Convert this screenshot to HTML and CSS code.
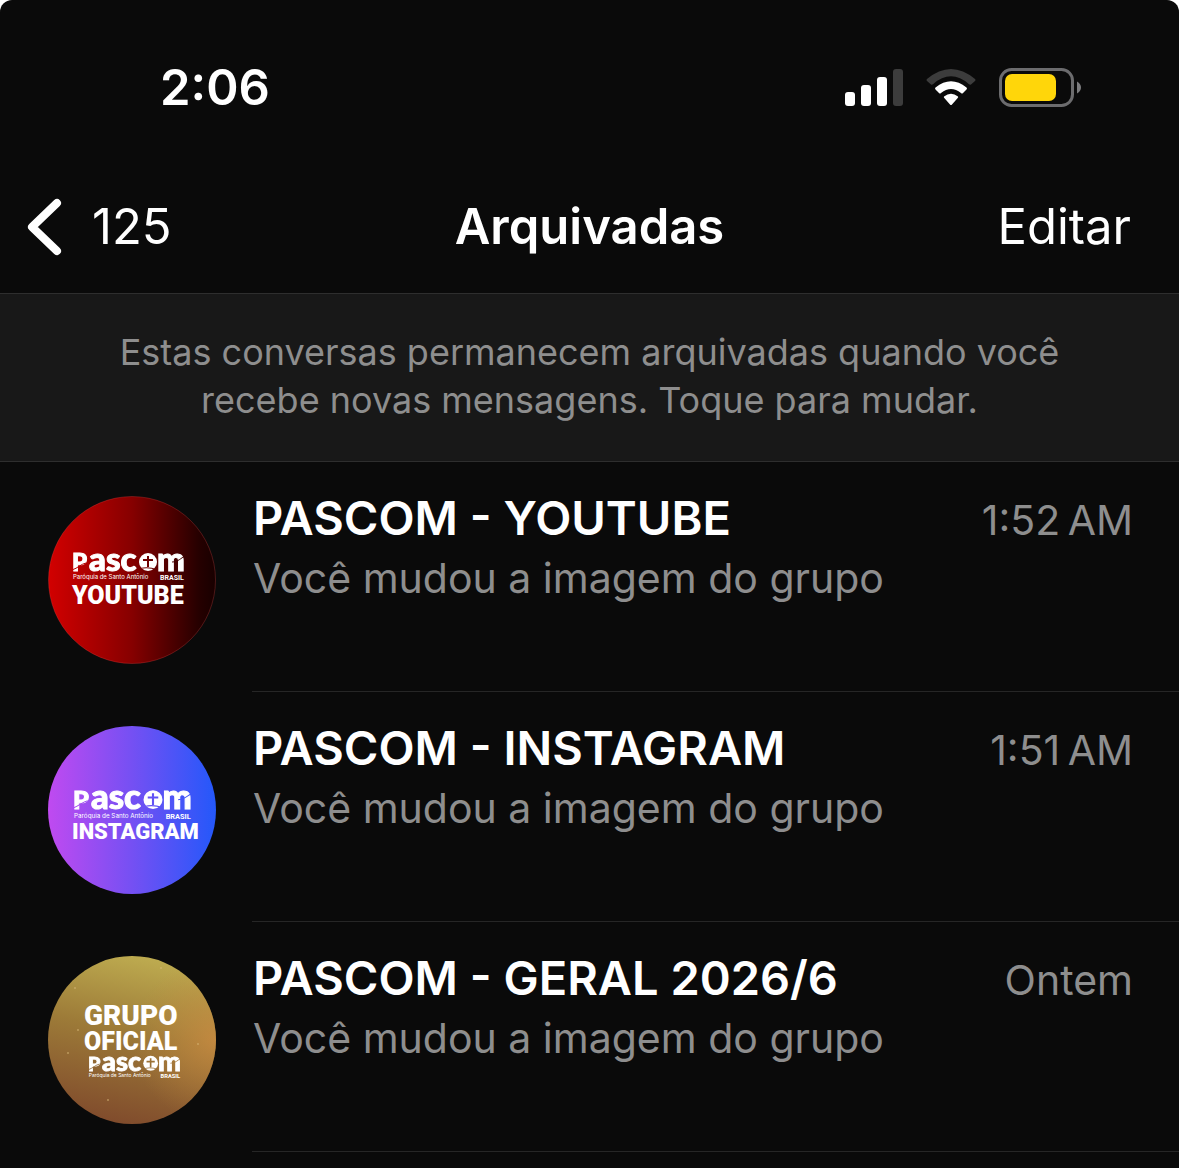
FILE: index.html
```html
<!DOCTYPE html>
<html lang="pt-BR">
<head>
  <meta charset="UTF-8" />
  <meta name="viewport" content="width=device-width, initial-scale=1.0"/>
  <title>Arquivadas</title>
  <link rel="stylesheet" href="styles.css">
</head>
<body>
  <!-- Shared logo, used inside the avatars -->
  <svg class="defs" width="0" height="0" aria-hidden="true">
    <defs>
      <linearGradient id="red"><stop offset="0" stop-color="#d20000"/><stop offset="0.5" stop-color="#860000"/><stop offset="0.9" stop-color="#260000"/><stop offset="1" stop-color="#180000"/></linearGradient>
      <linearGradient id="violet"><stop offset="0" stop-color="#c04af0"/><stop offset="0.5" stop-color="#7550f3"/><stop offset="1" stop-color="#2458fa"/></linearGradient>
      <linearGradient id="gold" x1="0.6" y1="0" x2="0.4" y2="1"><stop offset="0" stop-color="#beac50"/><stop offset="0.45" stop-color="#9d7b38"/><stop offset="1" stop-color="#804b2c"/></linearGradient>
      <radialGradient id="glow" cx="1" cy="0.5" r="0.5"><stop offset="0" stop-color="#d08c42" stop-opacity="0.7"/><stop offset="1" stop-color="#c08840" stop-opacity="0"/></radialGradient>
      <mask id="cuts">
        <rect width="114" height="34" fill="#fff"/>
        <path d="M0 18 C6 16 9 12 14 11 M100 10 C106 10 109 6 113 4" fill="none" stroke="#000" stroke-width="1"/>
        <path d="M75 4h2v3h4v2h-4v6h-2v-6h-4v-2h4z M68 16q8 -2 17 1v1q-9 -3 -17 -1z" fill="#000"/>
      </mask>
      <symbol id="pascom" viewBox="0 0 114 34">
        <g fill="#fff" mask="url(#cuts)">
          <text class="logo-cap" x="0" y="19">P</text>
          <text class="logo-text" x="17" y="19">asc</text>
          <circle cx="76" cy="10" r="9"/>
          <text class="logo-text" x="85" y="19">m</text>
        </g>
        <text class="logo-sub" x="1" y="27">Paróquia de Santo Antônio</text>
        <text class="logo-brasil" x="88" y="28">BRASIL</text>
      </symbol>
    </defs>
  </svg>

  <div class="screen">
    <div class="status-bar">
      <div class="clock">2:06</div>
      <div class="status-icons">
        <svg width="58" height="38" viewBox="0 0 58 38" fill="#fff">
          <rect x="0" y="24" width="10" height="14" rx="3"/>
          <rect x="16" y="17" width="10" height="21" rx="3"/>
          <rect x="32" y="9" width="10" height="29" rx="3"/>
          <rect x="48" y="1" width="10" height="37" rx="3" fill="#3c3c3c"/>
        </svg>
        <svg width="50" height="38" viewBox="0 0 50 38">
          <path d="M1 11 Q0 12 1 13 L5 16.500 Q6 17 7 16.200 Q25 0.500 43 16.200 Q44 17 45 16.500 L49 13 Q50 12 49 11 Q25 -9 1 11Z" fill="#3c3c3c"/>
          <path d="M9.500 19.500 Q8.500 20.500 9.500 21.500 L13 25 Q14 26 15 25 Q25 17 35 25 Q36 26 37 25 L40.500 21.500 Q41.500 20.500 40.500 19.500 Q25 7 9.500 19.500Z" fill="#fff"/>
          <path d="M18 28.500 Q17.500 29.300 18.300 30 L24 36.500 Q25 37.500 26 36.500 L31.700 30 Q32.500 29.300 32 28.500 Q25 23 18 28.500Z" fill="#fff"/>
        </svg>
        <svg width="83" height="39" viewBox="0 0 83 39">
          <rect x="1.500" y="1.500" width="72" height="36" rx="11" fill="none" stroke="#6c6c6e" stroke-width="3"/>
          <rect x="6" y="6" width="51" height="27" rx="7" fill="#ffd60a"/>
          <path d="M78 13.500 Q82 16 82 19.500 Q82 23 78 25.500Z" fill="#7c7c7e"/>
        </svg>
      </div>
    </div>

    <header class="nav-bar">
      <button class="back-btn" type="button" aria-label="Voltar, 125">
        <svg width="36" height="58" viewBox="0 0 36 58" fill="none" stroke="#fff" stroke-width="8" stroke-linecap="round" stroke-linejoin="round">
          <path d="M31 5 L6 29 L31 53"/>
        </svg>
        <span>125</span>
      </button>
      <h1>Arquivadas</h1>
      <button class="edit-btn" type="button">Editar</button>
    </header>

    <button class="notice" type="button">Estas conversas permanecem arquivadas quando você<br>recebe novas mensagens. Toque para mudar.</button>

    <ul class="chat-list">
      <li>
        <a class="chat" href="#">
          <svg class="avatar" viewBox="0 0 168 168" aria-hidden="true">
            <circle cx="84" cy="84" r="83.500" fill="url(#red)" stroke="#ff5050" stroke-opacity="0.25"/>
            <use href="#pascom" x="24" y="56" width="114" height="34"/>
            <text class="avatar-name" x="24" y="108">YOUTUBE</text>
          </svg>
          <div class="chat-body">
            <div class="chat-top">
              <h2>PASCOM - YOUTUBE</h2>
              <time>1:52&#8239;AM</time>
            </div>
            <p>Você mudou a imagem do grupo</p>
          </div>
        </a>
      </li>
      <li>
        <a class="chat" href="#">
          <svg class="avatar" viewBox="0 0 168 168" aria-hidden="true">
            <circle cx="84" cy="84" r="84" fill="url(#violet)"/>
            <use href="#pascom" x="25" y="63" width="120" height="36"/>
            <text class="avatar-name small" x="24" y="113">INSTAGRAM</text>
          </svg>
          <div class="chat-body">
            <div class="chat-top">
              <h2>PASCOM - INSTAGRAM</h2>
              <time>1:51&#8239;AM</time>
            </div>
            <p>Você mudou a imagem do grupo</p>
          </div>
        </a>
      </li>
      <li>
        <a class="chat" href="#">
          <svg class="avatar" viewBox="0 0 168 168" aria-hidden="true">
            <circle cx="84" cy="84" r="84" fill="url(#gold)"/>
            <circle cx="84" cy="84" r="84" fill="url(#glow)"/>
            <g fill="#d8b878" opacity="0.6">
              <circle cx="30" cy="74" r="1"/><circle cx="27" cy="32" r="1"/><circle cx="20" cy="97" r="1"/><circle cx="60" cy="144" r="1"/><circle cx="113" cy="12" r="1"/><circle cx="150" cy="88" r="1"/>
            </g>
            <text class="avatar-name large" x="36" y="69">GRUPO</text>
            <text class="avatar-name" x="36" y="94">OFICIAL</text>
            <use href="#pascom" x="40" y="99" width="94" height="28"/>
          </svg>
          <div class="chat-body">
            <div class="chat-top">
              <h2>PASCOM - GERAL 2026/6</h2>
              <time>Ontem</time>
            </div>
            <p>Você mudou a imagem do grupo</p>
          </div>
        </a>
      </li>
    </ul>
  </div>
</body>
</html>
```
FILE: styles.css
```css
* {
  box-sizing: border-box;
}

body {
  margin: 0;
  background: #fff;
  font-family: Inter, 'Liberation Sans', sans-serif;
  color: #fff;
}

button {
  font: inherit;
  color: inherit;
  background: none;
  border: none;
  padding: 0;
  cursor: pointer;
}

.defs {
  position: absolute;
}

.screen {
  min-height: 100vh;
  background: #0a0a0a;
  border-radius: 12px 12px 0 0;
}

.status-bar {
  display: flex;
  justify-content: space-between;
  align-items: center;
  padding: 58px 97px 0 160px;
}

.clock {
  font-size: 49px;
  line-height: 60px;
  font-weight: 600;
}

.status-icons {
  display: flex;
  align-items: center;
  gap: 23px;
  padding-bottom: 2px;
}

.nav-bar {
  display: grid;
  grid-template-columns: 1fr auto 1fr;
  align-items: center;
  height: 176px;
  padding-top: 43px;
  border-bottom: 1px solid #2e2e2e;
  font-size: 49px;
  line-height: 60px;
}

.nav-bar h1 {
  margin: 0;
  font-size: 49px;
  font-weight: 600;
}

.back-btn {
  display: flex;
  align-items: center;
  gap: 30px;
  margin-left: 26px;
}

.edit-btn {
  justify-self: end;
  margin-right: 48px;
}

.notice {
  display: block;
  width: 100%;
  padding: 34px 48px 37px;
  background: #181818;
  border-bottom: 1px solid #2e2e2e;
  color: #8e8e8e;
  font-size: 36px;
  line-height: 48px;
  text-align: center;
}

.chat-list {
  list-style: none;
  margin: 0;
  padding: 0;
}

.chat {
  display: flex;
  gap: 36px;
  padding-left: 48px;
  color: inherit;
  text-decoration: none;
}

.avatar {
  flex: none;
  width: 168px;
  height: 168px;
  margin-top: 34px;
}

.chat-body {
  flex: 1;
  min-height: 230px;
  padding: 26px 46px 0 1px;
  border-bottom: 1px solid #262626;
}

.chat-top {
  display: flex;
  justify-content: space-between;
  align-items: baseline;
}

.chat h2 {
  margin: 0;
  font-size: 47px;
  line-height: 60px;
  font-weight: 600;
}

.chat time {
  color: #8e8e8e;
  font-size: 41px;
}

.chat p {
  margin: 0;
  color: #8e8e8e;
  font-size: 41px;
  line-height: 60px;
}

/* Avatar artwork */
.avatar-name {
  fill: #fff;
  font-family: Roboto, sans-serif;
  font-size: 25px;
  font-weight: 900;
}

.avatar-name.small {
  font-size: 22px;
}

.avatar-name.large {
  font-size: 28px;
}

.logo-cap,
.logo-text {
  font-family: Lato, sans-serif;
  font-weight: 900;
  stroke: #fff;
  stroke-width: 1px;
}

.logo-cap {
  font-size: 24px;
}

.logo-text {
  font-size: 33px;
}

.logo-sub {
  fill: #fff;
  font-size: 6px;
}

.logo-brasil {
  fill: #fff;
  font-size: 7px;
  font-family: Roboto, sans-serif;
  font-weight: 700;
}
```
